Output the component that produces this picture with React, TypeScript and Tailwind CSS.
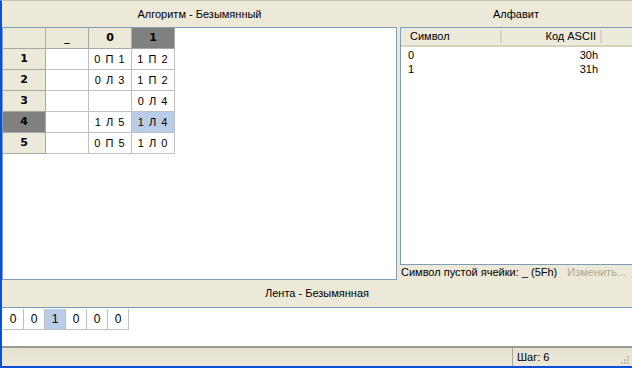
import React from "react";

const font = { fontFamily: "'Liberation Sans', Arial, sans-serif" };

const cols = ["_", "0", "1"];
const rows: { n: string; cells: string[] }[] = [
  { n: "1", cells: ["", "0 П 1", "1 П 2"] },
  { n: "2", cells: ["", "0 Л 3", "1 П 2"] },
  { n: "3", cells: ["", "", "0 Л 4"] },
  { n: "4", cells: ["", "1 Л 5", "1 Л 4"] },
  { n: "5", cells: ["", "0 П 5", "1 Л 0"] },
];

const tape = ["0", "0", "1", "0", "0", "0"];

function Fixed({ label, active }: { label: string; active?: boolean }) {
  return (
    <div
      className={
        "w-[43px] h-[21px] shrink-0 flex items-center justify-center border-r border-b border-[#a8a8a8] text-[11px] font-bold text-black " +
        (active ? "bg-[#808080]" : "bg-[#ece9d8]")
      }
      style={{ fontFamily: "'DejaVu Sans', sans-serif" }}
    >
      {label}
    </div>
  );
}

function Cell({ text, active }: { text: string; active?: boolean }) {
  return (
    <div
      className={
        "w-[43px] h-[21px] shrink-0 flex items-center justify-center border-r border-b border-[#c0c0c0] text-[11px] tracking-[1px] text-black " +
        (active ? "bg-[#b9cde9]" : "bg-white")
      }
    >
      {text}
    </div>
  );
}

export default function App() {
  return (
    <div
      className="w-[632px] h-[368px] flex flex-col bg-[#ece9d8] border-t border-t-[#c8c4b4] border-l-2 border-b-2 border-l-[#0a4fd8] border-b-[#0a4fd8] text-black text-[11px] overflow-hidden"
      style={font}
    >
      <div className="flex h-[279px] gap-[3px]">
        {/* algorithm */}
        <div className="w-[395px] shrink-0 flex flex-col">
          <div className="h-[26px] flex items-center justify-center">Алгоритм - Безымянный</div>
          <div className="flex-1 bg-white border border-[#7f9db9]">
            <div className="flex">
              <Fixed label="" />
              {cols.map((c, i) => (
                <Fixed key={c} label={c} active={i === 2} />
              ))}
            </div>
            {rows.map((r, ri) => (
              <div key={r.n} className="flex">
                <Fixed label={r.n} active={ri === 3} />
                {r.cells.map((t, ci) => (
                  <Cell key={ci} text={t} active={ri === 3 && ci === 2} />
                ))}
              </div>
            ))}
          </div>
        </div>

        {/* alphabet */}
        <div className="flex-1 min-w-0 flex flex-col">
          <div className="h-[26px] flex items-center justify-center">Алфавит</div>
          <div className="h-[238px] bg-white border border-r-0 border-[#7f9db9]">
            <div className="flex h-[19px] bg-[#ebeadb] border-b-2 border-[#d6d3c2]">
              <div className="w-[101px] flex items-center pl-[9px] border-r-2 border-[#d6d3c2] my-[2px]">Символ</div>
              <div className="w-[100px] flex items-center justify-end pr-[4px] border-r-2 border-[#d6d3c2] my-[2px]">Код ASCII</div>
            </div>
            <div className="pt-[1px]">
              {[
                ["0", "30h"],
                ["1", "31h"],
              ].map(([s, c]) => (
                <div key={s} className="flex h-[14px] items-center leading-[14px]">
                  <div className="w-[101px] pl-[7px]">{s}</div>
                  <div className="w-[100px] text-right pr-[4px]">{c}</div>
                </div>
              ))}
            </div>
          </div>
          <div className="h-[15px] flex items-center whitespace-nowrap overflow-hidden">
            <span className="ml-[1px]">Символ пустой ячейки: _ (5Fh)</span>
            <span className="ml-[10px] text-[#aca899]">Изменить...</span>
          </div>
        </div>
      </div>

      {/* tape */}
      <div className="h-[27px] flex items-center justify-center">Лента - Безымянная</div>
      <div className="h-[39px] bg-white border-t border-[#7f9db9] pt-[1px] pl-[1px]">
        <div className="flex">
          {tape.map((t, i) => (
            <div
              key={i}
              className={
                "w-[21px] h-[21px] flex items-center justify-center border-r border-b border-[#c0c0c0] text-[12px] " +
                (i === 2 ? "bg-[#b9cde9]" : "bg-white")
              }
            >
              {t}
            </div>
          ))}
        </div>
      </div>

      {/* status bar */}
      <div className="h-[2px] bg-[#9a9a93]" />
      <div className="flex-1 flex items-center bg-gradient-to-b from-[#e4e1d2] to-[#ece9d8] relative">
        <div className="w-[510px]" />
        <div className="h-full w-px bg-[#aca899]" />
        <span className="ml-[4px]">Шаг: 6</span>
        <svg className="absolute right-[2px] bottom-[1px]" width="11" height="11" viewBox="0 0 11 11">
          {[
            [8, 0],
            [5, 3],
            [8, 3],
            [2, 6],
            [5, 6],
            [8, 6],
          ].map(([x, y], i) => (
            <rect key={i} x={x} y={y + 2} width="2" height="2" fill="#c3bfae" />
          ))}
        </svg>
      </div>
    </div>
  );
}
